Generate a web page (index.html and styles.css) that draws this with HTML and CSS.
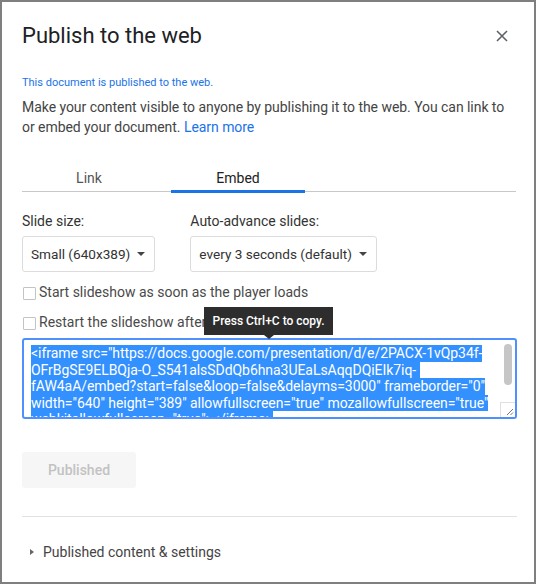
FILE: index.html
```html
<!DOCTYPE html>
<html>
<head>
<meta charset="utf-8">
<link rel="stylesheet" href="styles.css">
</head>
<body>
<div class="dialog">
  <div class="header">
    <h1 class="title">Publish to the web</h1>
    <svg class="close" width="12" height="12" viewBox="0 0 12 12"><path d="M1 1L11 11M11 1L1 11" stroke="#5f6368" stroke-width="1.6"/></svg>
  </div>
  <div class="status">This document is published to the web.</div>
  <p class="intro">Make your content visible to anyone by publishing it to the web. You can link to or embed your document. <span class="link">Learn more</span></p>
  <div class="tabs">
    <div class="tab">Link</div>
    <div class="tab active">Embed</div>
  </div>
  <div class="fields">
    <div class="field">
      <div class="label">Slide size:</div>
      <div class="select">Small (640x389)<span class="caret"></span></div>
    </div>
    <div class="field">
      <div class="label">Auto-advance slides:</div>
      <div class="select">every 3 seconds (default)<span class="caret"></span></div>
    </div>
  </div>
  <div class="check"><span class="box"></span>Start slideshow as soon as the player loads</div>
  <div class="check tipwrap"><span class="box"></span>Restart the slideshow after the last slide
    <div class="tooltip">Press Ctrl+C to copy.</div>
  </div>
  <div class="code">
    <div class="code-text">
      <div class="sel">&lt;iframe src="https://docs.google.com/presentation/d/e/2PACX-1vQp34f-</div>
      <div class="sel">OFrBgSE9ELBQja-O_S541alsSDdQb6hna3UEaLsAqqDQiEIk7iq- </div>
      <div class="sel">fAW4aA/embed?start=false&amp;loop=false&amp;delayms=3000" frameborder="0"</div>
      <div class="sel">width="640" height="389" allowfullscreen="true" mozallowfullscreen="true"</div>
      <div class="sel">webkitallowfullscreen="true"&gt;&lt;/iframe&gt;</div>
    </div>
    <div class="scroll">
      <div class="thumb"></div>
      <div class="grip">
        <svg width="14" height="14" viewBox="0 0 14 14"><path d="M12 6L6 12M12 9.5L9.5 12" stroke="#777" stroke-width="1"/></svg>
      </div>
    </div>
  </div>
  <div class="actions">
    <div class="btn">Published</div>
  </div>
  <div class="sep"></div>
  <div class="more"><span class="tri"></span>Published content &amp; settings</div>
</div>
</body>
</html>
```
FILE: styles.css
```css
* { box-sizing: border-box; }
html, body { margin: 0; padding: 0; background: #fff; }
body { font-family: Roboto, "Liberation Sans", sans-serif; color: #444; }
.dialog {
  width: 536px; height: 584px;
  border: 2px solid #7f7f7f;
  padding: 20px 18px 0 20px;
  overflow: hidden;
}
.header { display: flex; justify-content: space-between; align-items: flex-start; }
.title { margin: 0; font-size: 22px; font-weight: 400; line-height: 28px; color: #202124; }
.close { margin: 8px 8px 0 0; }
.status { margin-top: 26px; font-size: 11px; line-height: 14px; color: #1a73e8; }
.intro { margin: 7px 0 0; font-size: 14px; line-height: 20px; color: #444; width: 490px; letter-spacing: -0.05px; }
.link { color: #1a73e8; }
.tabs {
  display: flex; gap: 15px; margin-top: 24px;
  border-bottom: 1px solid #c8c8c8;
}
.tab { width: 134px; text-align: center; font-size: 14px; line-height: 20px; padding: 7px 0 3px; color: #555; }
.tab.active { color: #222; border-bottom: 3px solid #1a73e8; margin-bottom: -2px; padding-bottom: 2px; }
.fields { display: flex; gap: 35px; margin-top: 19px; }
.label { font-size: 14px; line-height: 20px; color: #333; }
.select {
  margin-top: 5px; height: 36px;
  display: flex; align-items: center;
  padding: 0 9px 0 8px;
  border: 1px solid #dcdcdc; border-radius: 3px;
  font-size: 13.6px; color: #333;
}
.caret {
  margin-left: 7px; width: 0; height: 0;
  border-left: 4px solid transparent; border-right: 4px solid transparent;
  border-top: 4px solid #444;
}
.check { display: flex; align-items: center; font-size: 14px; line-height: 20px; color: #4a4a4a; margin-top: 10px; }
.check + .check { margin-top: 10px; }
.box { width: 13px; height: 13px; border: 1px solid #c4c4c4; border-radius: 1px; margin: 3px 3px 0 1px; background: #fff; }
.tipwrap { position: relative; }
.tooltip {
  position: absolute; left: 182px; top: -5px;
  width: 129px; height: 28px;
  background: #2d2d2d; color: #fff;
  font-size: 12px; font-weight: 500; line-height: 28px; text-align: center;
}
.tooltip::after {
  content: ""; position: absolute; left: 60px; top: 28px;
  border-left: 5px solid transparent; border-right: 5px solid transparent;
  border-top: 4px solid #2d2d2d;
}
.code {
  margin-top: 6px; height: 81px; width: 495px;
  border: 2px solid #4d90fe; border-radius: 3px;
  display: flex; overflow: hidden;
}
.code-text { flex: 1; padding: 5px 0 0 7px; font-size: 14px; line-height: 16.5px; letter-spacing: -0.05px; }
.sel { width: fit-content; height: 16.5px; background: #3390ff; color: #fff; white-space: pre; }
.scroll { width: 16px; display: flex; flex-direction: column; justify-content: space-between; align-items: center; padding-top: 4px; }
.thumb { width: 8px; height: 41px; background: #c6c6c6; border-radius: 4px; margin-left: 1px; }
.grip { width: 15px; height: 15px; background: #fff; border-top: 1px solid #e0e0e0; border-left: 1px solid #e0e0e0; display: flex; }
.actions { margin-top: 33px; }
.btn {
  width: 114px; height: 36px; border-radius: 3px;
  background: #f6f6f6; color: #c2c2c2;
  font-size: 14px; font-weight: 500; text-align: center; line-height: 36px;
}
.sep { margin-top: 28px; height: 1px; background: #e2e2e2; width: 495px; }
.more { display: flex; align-items: center; margin-top: 25px; font-size: 14px; line-height: 20px; color: #444; }
.tri {
  width: 0; height: 0; margin: 0 9px 0 8px;
  border-top: 3.5px solid transparent; border-bottom: 3.5px solid transparent;
  border-left: 4px solid #666;
}
```
